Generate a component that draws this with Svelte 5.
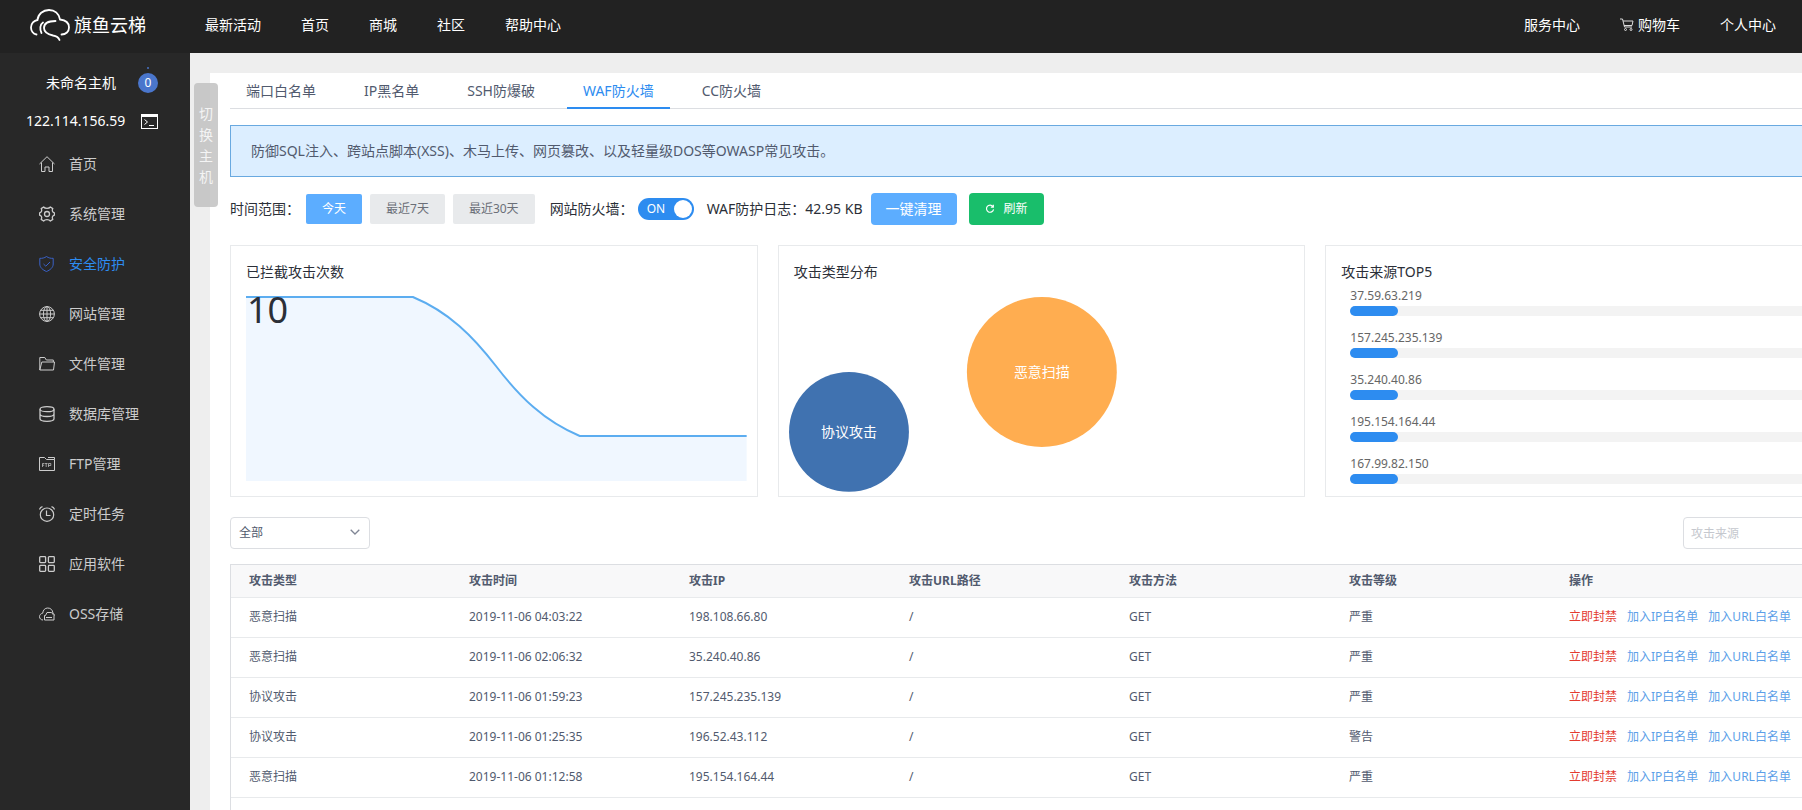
<script>
  const topLinks = ['最新活动', '首页', '商城', '社区', '帮助中心'];

  const menu = [
    { name: '首页', icon: 'home' },
    { name: '系统管理', icon: 'gear' },
    { name: '安全防护', icon: 'shield' },
    { name: '网站管理', icon: 'globe' },
    { name: '文件管理', icon: 'folder' },
    { name: '数据库管理', icon: 'database' },
    { name: 'FTP管理', icon: 'ftp' },
    { name: '定时任务', icon: 'clock' },
    { name: '应用软件', icon: 'apps' },
    { name: 'OSS存储', icon: 'oss' },
  ];
  let activeMenu = $state('安全防护');

  const tabs = ['端口白名单', 'IP黑名单', 'SSH防爆破', 'WAF防火墙', 'CC防火墙'];
  let activeTab = $state('WAF防火墙');

  const ranges = ['今天', '最近7天', '最近30天'];
  let activeRange = $state('今天');

  let wafOn = $state(true);
  let filterType = $state('全部');
  let source = $state('');

  const topSources = [
    { ip: '37.59.63.219', percent: 10 },
    { ip: '157.245.235.139', percent: 10 },
    { ip: '35.240.40.86', percent: 10 },
    { ip: '195.154.164.44', percent: 10 },
    { ip: '167.99.82.150', percent: 10 },
  ];

  const columns = ['攻击类型', '攻击时间', '攻击IP', '攻击URL路径', '攻击方法', '攻击等级', '操作'];

  const logs = [
    { type: '恶意扫描', time: '2019-11-06 04:03:22', ip: '198.108.66.80', url: '/', method: 'GET', level: '严重' },
    { type: '恶意扫描', time: '2019-11-06 02:06:32', ip: '35.240.40.86', url: '/', method: 'GET', level: '严重' },
    { type: '协议攻击', time: '2019-11-06 01:59:23', ip: '157.245.235.139', url: '/', method: 'GET', level: '严重' },
    { type: '协议攻击', time: '2019-11-06 01:25:35', ip: '196.52.43.112', url: '/', method: 'GET', level: '警告' },
    { type: '恶意扫描', time: '2019-11-06 01:12:58', ip: '195.154.164.44', url: '/', method: 'GET', level: '严重' },
  ];

  let rows = $derived(logs.filter((l) => (filterType === '全部' || l.type === filterType) && l.ip.includes(source)));
</script>

<div class="app">
  <header class="topbar">
    <a class="logo" href="#home">
      <svg width="40" height="32" viewBox="0 0 40 32" fill="none" stroke="#fff" stroke-width="1.800" stroke-linecap="round">
        <path d="M6.500 25.500C3 25 1 21.500 1 18.500C1 14.500 4 11.500 7.500 11C8 5 13 1 19 1C24.500 1 29 4.500 30 10.500C35.500 11 39 14 39 18.500C39 22.500 36 25.500 31.500 25.500" />
        <path d="M13 13.500C10 15.500 9.500 20 11.500 24" />
        <path d="M25.500 12C19 12 14 14 14 19C14 24 18.500 25.500 23 26.500C26.500 27 28.500 28 29.500 31" />
      </svg>
      <span>旗鱼云梯</span>
    </a>
    <nav class="top-nav">
      {#each topLinks as link}
        <a href="#{link}">{link}</a>
      {/each}
    </nav>
    <nav class="top-nav user-nav">
      <a href="#service">服务中心</a>
      <a href="#cart" class="cart">
        <svg width="14" height="14" viewBox="0 0 14 14" fill="none" stroke="#ddd">
          <path d="M0 1h2.500l2 8h7.500M3 3h10l-1 4.500H4" />
          <circle cx="5.500" cy="11.500" r="1" /><circle cx="11" cy="11.500" r="1" />
        </svg>
        购物车
      </a>
      <a href="#me">个人中心</a>
    </nav>
  </header>

  <div class="body">
    <aside class="sidebar">
      <div class="host-name">
        <span>未命名主机</span>
        <span class="badge">0</span>
      </div>
      <div class="host-ip">
        <span>122.114.156.59</span>
        <button class="terminal" aria-label="终端">
          <svg width="17" height="15" viewBox="0 0 17 15" fill="none" stroke="#fff">
            <rect x="0.500" y="0.500" width="16" height="14" /><path d="M1 2h15" stroke-width="2" />
            <path d="M3.500 5.500L6.500 8L3.500 10.500M8 11.500h5" />
          </svg>
        </button>
      </div>
      <nav class="menu">
        {#each menu as item}
          <a href="#{item.icon}" class:active={activeMenu === item.name} onclick={() => (activeMenu = item.name)}>
            <svg width="16" height="16" viewBox="0 0 16 16" fill="none" stroke="currentColor">
              {#if item.icon === 'home'}
                <path d="M0.500 8L8 0.700L15.500 8M2.500 6.500v9h3.500v-4.500h4v4.500h3.500v-9" />
              {:else if item.icon === 'gear'}
                <path d="M4.600 1C6 2.900 10 2.900 11.400 1L13.800 2.600C12.800 4.800 13.400 6.200 15.400 6.800V9.200C13.400 9.800 12.800 11.200 13.800 13.400L11.400 15C10 13.100 6 13.100 4.600 15L2.200 13.400C3.200 11.200 2.600 9.800 0.600 9.200V6.800C2.600 6.200 3.200 4.800 2.200 2.600Z" stroke-width="1.300" stroke-linejoin="round" /><circle cx="8" cy="8" r="2.500" stroke-width="1.300" />
              {:else if item.icon === 'shield'}
                <path d="M7.500 0.500C5.500 2 3 2.500 0.800 2.300V8c0 3.500 3 6 6.700 7.500C11.200 14 14.200 11.500 14.200 8V2.300C12 2.500 9.500 2 7.500 0.500zM4.500 8l2.300 2.200L11 6" />
              {:else if item.icon === 'globe'}
                <circle cx="8" cy="8" r="7.400" /><ellipse cx="8" cy="8" rx="3.600" ry="7.400" /><path d="M8 .6v14.800M.6 8h14.800M1.800 4.300h12.400M1.800 11.700h12.400" />
              {:else if item.icon === 'folder'}
                <path d="M0.800 14V1.500h5l1.500 2.500h7v2M0.800 14l2-8h12.700l-1 8z" stroke-linejoin="round" />
              {:else if item.icon === 'database'}
                <g stroke-width="1.300"><ellipse cx="8" cy="3.200" rx="7" ry="2.500" /><path d="M1 3.200v9.600c0 1.500 3 2.500 7 2.500s7-1 7-2.500V3.200M1 8c0 1.500 3 2.500 7 2.500S15 9.500 15 8" /></g>
              {:else if item.icon === 'ftp'}
                <path d="M0.500 14.500v-13h5l2 2h8v11zM9 1.500h6.500v2" /><path d="M3.500 11V7.500h2M3.500 9.200h1.700M6 7.500h2.500M7.200 7.500V11M9.500 11V7.500h2.300v2H9.500" stroke-width="0.700" />
              {:else if item.icon === 'clock'}
                <circle cx="8" cy="8.700" r="6.700" stroke-width="1.200" /><path d="M7.500 4.500v5h4M0.500 3.500C1 2 2 1 3.500 .7M15.500 3.500C15 2 14 1 12.500 .7" stroke-width="1.200" />
              {:else if item.icon === 'apps'}
                <g stroke-width="1.300"><rect x="0.700" y="0.700" width="5.900" height="5.900" rx="0.800" /><rect x="9.400" y="0.700" width="5.900" height="5.900" rx="0.800" /><rect x="0.700" y="9.400" width="5.900" height="5.900" rx="0.800" /><rect x="9.400" y="9.400" width="5.900" height="5.900" rx="0.800" /></g>
              {:else}
                <path d="M4 14C2 14 .5 12.500 .5 10.700S2 7.400 3.700 7.200C4 4 6 2 8.700 2c3 0 5 2 5.200 5 1 .5 1.600 1.500 1.600 2.500" /><path d="M6.500 9.500L8 6.500h4.500L15 9.500V14H5.500V9.500zM7 11.500h6" />
              {/if}
            </svg>
            <span>{item.name}</span>
          </a>
        {/each}
      </nav>
    </aside>

    <main>
      <button class="switch-host">切换主机</button>
      <div class="panel">
        <div class="tabs" role="tablist">
          {#each tabs as tab}
            <button role="tab" aria-selected={activeTab === tab} class:active={activeTab === tab} onclick={() => (activeTab = tab)}>{tab}</button>
          {/each}
        </div>

        <p class="notice">防御SQL注入、跨站点脚本(XSS)、木马上传、网页篡改、以及轻量级DOS等OWASP常见攻击。</p>

        <div class="toolbar">
          <span class="range-label">时间范围：</span>
          <div class="ranges">
            {#each ranges as range}
              <button class:active={activeRange === range} onclick={() => (activeRange = range)}>{range}</button>
            {/each}
          </div>
          <label class="switch-label" for="waf">网站防火墙：</label>
          <span class="switch">
            <input id="waf" type="checkbox" role="switch" bind:checked={wafOn} />
            <span class="switch-text">{wafOn ? 'ON' : 'OFF'}</span>
          </span>
          <span class="log-size">WAF防护日志：42.95 KB</span>
          <button class="btn-clear">一键清理</button>
          <button class="btn-refresh">
            <svg width="10" height="10" viewBox="0 0 12 12" fill="none" stroke="#fff" stroke-width="1.400">
              <path d="M9.500 3A4.300 4.300 0 1 0 10.300 6.500M10 .8v3H7" />
            </svg>
            刷新
          </button>
        </div>

        <div class="cards">
          <section class="card">
            <h2>已拦截攻击次数</h2>
            <div class="chart">
              <svg viewBox="0 0 501 185" preserveAspectRatio="none">
                <path d="M0 1H167C203 16 227 40 250.500 70.500C274 101 298 125 334 140H501V185H0Z" fill="#f0f7ff" />
                <path d="M0 1H167C203 16 227 40 250.500 70.500C274 101 298 125 334 140H501" fill="none" stroke="#5cadf0" stroke-width="2" />
              </svg>
              <strong>10</strong>
            </div>
          </section>
          <section class="card">
            <h2>攻击类型分布</h2>
            <svg class="bubbles" viewBox="0 0 501 196">
              <circle cx="55" cy="136" r="60" fill="#4072b0" />
              <text x="55" y="141">协议攻击</text>
              <circle cx="248" cy="76" r="75" fill="#ffad50" />
              <text x="248" y="81">恶意扫描</text>
            </svg>
          </section>
          <section class="card">
            <h2>攻击来源TOP5</h2>
            <ul class="sources">
              {#each topSources as s}
                <li>
                  <span>{s.ip}</span>
                  <div class="track"><div class="fill" style="width: {s.percent}%"></div></div>
                </li>
              {/each}
            </ul>
          </section>
        </div>

        <div class="filters">
          <div class="select">
            <select aria-label="攻击类型" bind:value={filterType}>
              <option>全部</option>
              <option>恶意扫描</option>
              <option>协议攻击</option>
            </select>
            <svg width="10" height="6" viewBox="0 0 10 6" fill="none" stroke="#808695" stroke-width="1.300"><path d="M0.700 0.700L5 5L9.300 0.700" /></svg>
          </div>
          <input class="search" type="text" placeholder="攻击来源" aria-label="攻击来源" bind:value={source} />
        </div>

        <div class="table-wrap">
          <table>
            <thead>
              <tr>
                {#each columns as col}
                  <th>{col}</th>
                {/each}
              </tr>
            </thead>
            <tbody>
              {#each rows as row}
                <tr>
                  <td>{row.type}</td>
                  <td>{row.time}</td>
                  <td>{row.ip}</td>
                  <td>{row.url}</td>
                  <td>{row.method}</td>
                  <td>{row.level}</td>
                  <td>
                    <div class="actions">
                      <a href="#ban" class="danger">立即封禁</a>
                      <a href="#ip">加入IP白名单</a>
                      <a href="#url">加入URL白名单</a>
                    </div>
                  </td>
                </tr>
              {/each}
            </tbody>
          </table>
        </div>
      </div>
    </main>
  </div>
</div>

<style>
  :global(body) { background: #eee; }
  .app { display: flex; flex-direction: column; min-height: 100vh; font-family: "Noto Sans", "Noto Sans CJK SC", sans-serif; font-size: 14px; line-height: 20px; color: #2b2f38; }
  .app * { box-sizing: border-box; }
  a { text-decoration: none; color: inherit; }
  button, input, select { font: inherit; color: inherit; border: 0; padding: 0; background: none; }
  button { cursor: pointer; }
  svg { display: block; flex: none; }

  .topbar { display: flex; align-items: center; height: 53px; padding: 0 26px 4px 30px; background: #222; color: #fff; }
  .logo { display: flex; align-items: center; gap: 4px; width: 175px; font-size: 18px; }
  .top-nav { display: flex; gap: 40px; }
  .user-nav { margin-left: auto; }
  .cart { display: flex; align-items: center; gap: 4px; }

  .body { display: flex; flex: 1; }
  .sidebar { flex: none; width: 190px; padding-top: 18px; background: #282828; color: #fff; }
  .host-name { display: flex; align-items: center; justify-content: space-between; height: 24px; padding: 0 32px 0 46px; }
  .badge { position: relative; width: 20px; height: 20px; border-radius: 50%; background: #4a76cc; text-align: center; font-size: 12px; }
  .badge::before { content: ''; position: absolute; left: 9px; top: -6px; width: 2px; height: 2px; background: #3f5f9c; }
  .host-ip { display: flex; align-items: center; justify-content: space-between; height: 24px; margin: 14px 32px 6px 26px; }
  .menu { display: flex; flex-direction: column; }
  .menu a { display: flex; align-items: center; gap: 14px; height: 50px; padding-left: 39px; color: #ccc; }
  .menu a.active { color: #2d8cf0; }
  .menu a.active svg { color: #3a62c8; }

  main { position: relative; display: flex; flex: 1; min-width: 0; padding: 20px 0 0 20px; overflow: hidden; }
  .switch-host { position: absolute; left: 4px; top: 30px; width: 24px; padding: 20px 5px; border-radius: 4px; background: rgba(190, 190, 190, 0.8); color: #f4f4f4; line-height: 21px; }
  .panel { display: flex; flex: 1 0 0; flex-direction: column; min-width: 1663px; padding: 0 20px; background: #fff; }

  .tabs { display: flex; gap: 16px; height: 36px; border-bottom: 1px solid #dcdee2; color: #515a6e; }
  .tabs button { height: 36px; padding: 2px 16px 0; border-bottom: 2px solid transparent; }
  .tabs button.active { color: #2d8cf0; border-color: #2d8cf0; }
  .notice { margin: 16px 0; padding: 15px 20px; border: 1px solid #69a9e0; background: #dceeff; color: #515a6e; }

  .toolbar { display: flex; align-items: center; height: 32px; }
  .range-label { margin-right: 6px; }
  .ranges { display: flex; gap: 8px; margin-right: 15px; }
  .ranges button { height: 30px; padding: 0 16px; border-radius: 2px; background: #e8eaec; color: #6b6f78; font-size: 12px; }
  .ranges button.active { background: #5cadff; color: #fff; }
  .switch-label { margin-right: 4px; }
  .switch { position: relative; width: 56px; height: 22px; margin-right: 13px; }
  .switch input { appearance: none; width: 56px; height: 22px; margin: 0; border-radius: 11px; background: #2d8cf0; cursor: pointer; }
  .switch input::after { content: ''; position: absolute; right: 2px; top: 2px; width: 18px; height: 18px; border-radius: 50%; background: #fff; }
  .switch input:not(:checked) { background: #c5c8ce; }
  .switch input:not(:checked)::after { right: auto; left: 2px; }
  .switch-text { position: absolute; left: 9px; top: 1px; color: #fff; font-size: 12px; pointer-events: none; }
  .log-size { margin-right: 8px; }
  .btn-clear { height: 32px; padding: 0 15px; margin-right: 12px; border-radius: 4px; background: #5cadff; color: #fff; }
  .btn-refresh { display: flex; align-items: center; gap: 9px; height: 32px; padding: 0 16px; border-radius: 4px; background: #19be6b; color: #fff; font-size: 12px; }

  .cards { display: grid; grid-template-columns: repeat(3, minmax(0, 1fr)); gap: 20px; margin: 20px 0; }
  .card { height: 252px; padding: 16px 10px 0 15px; border: 1px solid #e8eaec; }
  .card h2 { margin: 0 0 14px; font-size: 14px; font-weight: 400; line-height: 20px; }
  .chart { position: relative; }
  .chart svg { width: 100%; height: 185px; }
  .chart strong { position: absolute; left: 1px; top: 0; font-size: 36px; font-weight: 400; line-height: 28px; }
  .bubbles { width: 100%; overflow: visible; font-size: 14px; fill: #fff; text-anchor: middle; }
  .sources { margin: -10px 12px 0 9px; padding: 0; list-style: none; font-size: 12px; color: #666; }
  .sources li { height: 42px; }
  .sources span { display: block; line-height: 20px; }
  .track { height: 10px; border-radius: 5px; background: #f3f3f3; }
  .fill { height: 10px; border-radius: 5px; background: #2d8cf0; }

  .filters { display: flex; justify-content: space-between; margin-bottom: 15px; font-size: 12px; }
  .select { position: relative; width: 140px; }
  .select select { appearance: none; width: 100%; height: 32px; padding: 0 8px; border: 1px solid #dcdee2; border-radius: 4px; color: #515a6e; }
  .select svg { position: absolute; right: 10px; top: 12px; pointer-events: none; }
  .search { width: 170px; height: 32px; padding: 0 7px; border: 1px solid #dcdee2; border-radius: 4px; background: #fff; }
  .search::placeholder { color: #c5c8ce; }

  .table-wrap { flex: 1; border: 1px solid #dcdee2; border-width: 1px 0 0 1px; }
  table { width: 100%; border-collapse: collapse; table-layout: fixed; font-size: 12px; color: #515a6e; }
  th, td { height: 40px; padding: 0 18px; border-bottom: 1px solid #e8eaec; text-align: left; }
  th { height: 32px; width: 220px; background: #f8f8f9; font-weight: 700; }
  th:last-child { width: auto; }
  .actions { display: flex; gap: 10px; white-space: nowrap; color: #5c9fe8; }
  .danger { color: #e33b30; }
</style>
